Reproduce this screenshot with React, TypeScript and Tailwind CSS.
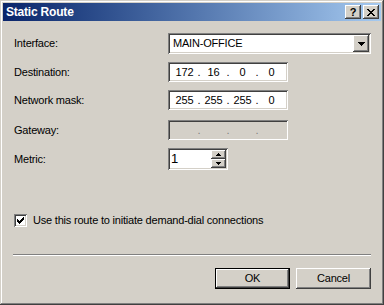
import React from 'react';

const raised =
  'bg-[#d4d0c8] shadow-[inset_-1px_-1px_#404040,inset_1px_1px_#ffffff,inset_-2px_-2px_#808080,inset_2px_2px_#d4d0c8]';
const sunken =
  'shadow-[inset_1px_1px_#808080,inset_-1px_-1px_#ffffff,inset_2px_2px_#404040,inset_-2px_-2px_#d4d0c8]';

const DownArrow = () => (
  <svg width="7" height="4" viewBox="0 0 7 4" shapeRendering="crispEdges">
    <path d="M0 0h7v1H0zM1 1h5v1H1zM2 2h3v1H2zM3 3h1v1H3z" fill="#000" />
  </svg>
);

const SmallArrow = ({ up }: { up?: boolean }) => (
  <svg width="5" height="3" viewBox="0 0 5 3" shapeRendering="crispEdges">
    {up ? (
      <path d="M2 0h1v1H2zM1 1h3v1H1zM0 2h5v1H0z" fill="#000" />
    ) : (
      <path d="M0 0h5v1H0zM1 1h3v1H1zM2 2h1v1H2z" fill="#000" />
    )}
  </svg>
);

function IpField({ parts, disabled }: { parts: string[]; disabled?: boolean }) {
  return (
    <div className={`flex items-center w-[120px] h-[20px] pl-[4px] ${disabled ? 'bg-[#d4d0c8]' : 'bg-white'} ${sunken}`}>
      {parts.map((p, i) => (
        <React.Fragment key={i}>
          <span className="w-[25px] text-center">{p}</span>
          {i < 3 && (
            <span className={`w-[4px] text-center ${disabled ? 'text-[#808080]' : ''}`}>.</span>
          )}
        </React.Fragment>
      ))}
    </div>
  );
}

function Row({ label, children, className }: { label: string; children: React.ReactNode; className?: string }) {
  return (
    <div className={`flex items-center ${className ?? ''}`}>
      <span className="w-[165px] pl-[11px]">{label}</span>
      {children}
    </div>
  );
}

export default function App() {
  return (
    <div
      className="w-[384px] h-[305px] bg-[#d4d0c8] p-[3px] flex flex-col text-[11px] tracking-[-0.2px] text-black shadow-[inset_-1px_-1px_#404040,inset_1px_1px_#d4d0c8,inset_-2px_-2px_#808080,inset_2px_2px_#ffffff]"
      style={{ fontFamily: '"Liberation Sans", Arial, sans-serif' }}
    >
      {/* title bar */}
      <div className="h-[18px] flex items-center justify-between pl-[3px] pr-[2px] bg-gradient-to-r from-[#0a246a] to-[#a6caf0]">
        <span className="text-white font-bold text-[12px] tracking-[-0.2px]">Static Route</span>
        <div className="flex items-center">
          <button className={`w-[16px] h-[14px] flex items-center justify-center font-bold text-[11px] leading-none ${raised}`}>?</button>
          <button className={`w-[16px] h-[14px] ml-[2px] flex items-center justify-center ${raised}`}>
            <svg width="8" height="7" viewBox="0 0 8 7" shapeRendering="crispEdges">
              <path d="M0 0h2v1H0zM6 0h2v1H6zM1 1h2v1H1zM5 1h2v1H5zM2 2h4v1H2zM3 3h2v1H3zM2 4h4v1H2zM1 5h2v1H1zM5 5h2v1H5zM0 6h2v1H0zM6 6h2v1H6z" fill="#000" />
            </svg>
          </button>
        </div>
      </div>

      <div className="flex flex-col">
        <Row label="Interface:" className="mt-[12px]">
          <div className={`flex items-center w-[203px] h-[21px] bg-white pl-[5px] pr-[2px] ${sunken}`}>
            <span className="flex-1">MAIN-OFFICE</span>
            <div className={`w-[16px] h-[17px] flex items-center justify-center ${raised}`}>
              <DownArrow />
            </div>
          </div>
        </Row>
        <Row label="Destination:" className="mt-[8px]">
          <IpField parts={['172', '16', '0', '0']} />
        </Row>
        <Row label="Network mask:" className="mt-[8px]">
          <IpField parts={['255', '255', '255', '0']} />
        </Row>
        <Row label="Gateway:" className="mt-[10px]">
          <IpField parts={['', '', '', '']} disabled />
        </Row>
        <Row label="Metric:" className="mt-[8px]">
          <div className={`flex items-center w-[60px] h-[22px] bg-white pl-[3px] pr-[2px] ${sunken}`}>
            <span className="flex-1 text-[13px]">1</span>
            <div className="flex flex-col">
              <div className={`w-[15px] h-[9px] flex items-center justify-center ${raised}`}>
                <SmallArrow up />
              </div>
              <div className={`w-[15px] h-[9px] flex items-center justify-center ${raised}`}>
                <SmallArrow />
              </div>
            </div>
          </div>
        </Row>
      </div>

      <div className="flex items-center mt-[42px] pl-[11px]">
        <div className={`w-[13px] h-[13px] bg-white flex items-center justify-center ${sunken}`}>
          <svg width="7" height="7" viewBox="0 0 7 7" shapeRendering="crispEdges">
            <path d="M6 0h1v3H6zM5 1h1v3H5zM4 2h1v3H4zM3 3h1v3H3zM2 4h1v3H2zM1 3h1v3H1zM0 2h1v3H0z" fill="#000" />
          </svg>
        </div>
        <span className="ml-[6px]">Use this route to initiate demand-dial connections</span>
      </div>

      <div className="mt-[25px] mx-[10px] h-[2px] border-t border-[#808080] border-b border-b-white" />

      <div className="flex justify-end gap-[6px] mt-[12px] pr-[10px]">
        <button className="w-[75px] h-[21px] border border-black p-0">
          <div className={`w-full h-full flex items-center justify-center ${raised}`}>OK</div>
        </button>
        <button className={`w-[75px] h-[21px] flex items-center justify-center ${raised}`}>Cancel</button>
      </div>
    </div>
  );
}
